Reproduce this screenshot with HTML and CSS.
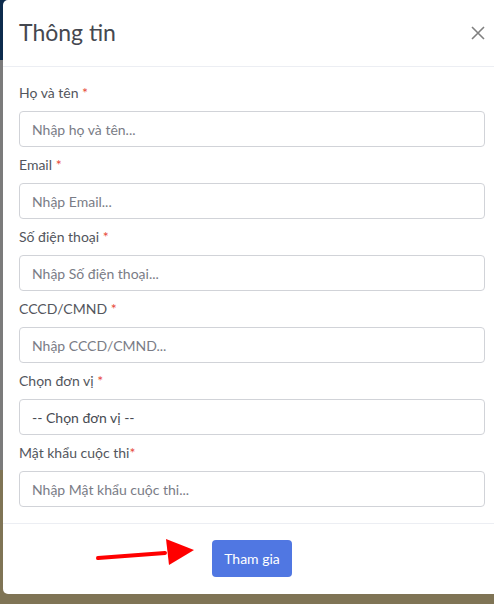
FILE: index.html
```html
<!DOCTYPE html>
<html lang="vi">
<head>
    <meta charset="UTF-8">
    <meta name="viewport" content="width=device-width, initial-scale=1.0">
    <title>Thông tin</title>
    <link rel="stylesheet" href="styles.css">
</head>
<body>
    <div class="modal">
        <div class="modal-header">
            <h2 class="modal-title">Thông tin</h2>
            <button class="close" type="button" aria-label="Đóng">
                <svg width="14" height="14" viewBox="0 0 14 14">
                    <path d="M1 1 L13 13 M13 1 L1 13" stroke="#808080" stroke-width="1.6" fill="none"/>
                </svg>
            </button>
        </div>

        <div class="modal-body">
            <div class="form-group">
                <label for="hoTen">Họ và tên <span class="req">*</span></label>
                <input type="text" id="hoTen" placeholder="Nhập họ và tên...">
            </div>
            <div class="form-group">
                <label for="email">Email <span class="req">*</span></label>
                <input type="text" id="email" placeholder="Nhập Email...">
            </div>
            <div class="form-group">
                <label for="soDienThoai">Số điện thoại <span class="req">*</span></label>
                <input type="text" id="soDienThoai" placeholder="Nhập Số điện thoại...">
            </div>
            <div class="form-group">
                <label for="cccd">CCCD/CMND <span class="req">*</span></label>
                <input type="text" id="cccd" placeholder="Nhập CCCD/CMND...">
            </div>
            <div class="form-group">
                <label for="donVi">Chọn đơn vị <span class="req">*</span></label>
                <select id="donVi">
                    <option>-- Chọn đơn vị --</option>
                </select>
            </div>
            <div class="form-group">
                <label for="matKhau">Mật khẩu cuộc thi<span class="req">*</span></label>
                <input type="text" id="matKhau" placeholder="Nhập Mật khẩu cuộc thi...">
            </div>
        </div>

        <div class="modal-footer">
            <button class="btn-primary" type="button">Tham gia</button>
        </div>

        <!-- mũi tên chỉ vào nút -->
        <svg class="arrow" width="120" height="40" viewBox="0 0 120 40">
            <path d="M7 30 L74 25" stroke="#f00" stroke-width="4" stroke-linecap="round" fill="none"/>
            <polygon points="75,11 103,22 78,37" fill="#f00"/>
        </svg>
    </div>
</body>
</html>
```

FILE: styles.css
```css
body {
    margin: 0;
    height: 604px;
    overflow: hidden;
    font-family: Lato, "Liberation Sans", sans-serif;
    background: linear-gradient(to bottom, #0d2b4d 0, #0d2b4d 60px, #7b7b7b 60px, #7b7b7b 470px, #7f7455 470px);
}

.modal {
    position: relative;
    margin-left: 3px;
    width: 498px;
    height: 594px;
    background: #fff;
    border-radius: 5px;
}

.modal-header {
    height: 66px;
    padding: 0 16px;
    display: flex;
    align-items: center;
    justify-content: space-between;
    border-bottom: 1px solid #eceef3;
}

.modal-title {
    margin: 0;
    font-size: 23px;
    font-weight: normal;
    color: #454850;
    line-height: 1.2;
}

.close {
    border: none;
    background: none;
    padding: 0;
    display: flex;
    cursor: pointer;
}

.modal-body {
    padding: 16px;
}

.form-group {
    margin-bottom: 8px;
}

.form-group:last-child {
    margin-bottom: 0;
}

.form-group label {
    display: block;
    font-size: 14px;
    line-height: 20px;
    color: #53565d;
    margin-bottom: 8px;
}

.req {
    color: #e74a3b;
}

.form-group input,
.form-group select {
    display: block;
    box-sizing: border-box;
    width: 100%;
    height: 36px;
    padding: 0 12px;
    font-family: inherit;
    font-size: 14px;
    color: #484b52;
    background: #fff;
    border: 1px solid #d1d3d8;
    border-radius: 4px;
    outline: none;
}

.form-group select {
    appearance: none;
    -webkit-appearance: none;
}

.form-group input::placeholder {
    color: #7a7c86;
}

.modal-footer {
    border-top: 1px solid #eceef3;
    padding: 16px;
    display: flex;
    justify-content: center;
}

.btn-primary {
    width: 80px;
    height: 37px;
    border: none;
    border-radius: 4px;
    background: #5077e2;
    color: #fff;
    font-family: inherit;
    font-size: 14px;
    cursor: pointer;
}

.arrow {
    position: absolute;
    left: 88px;
    top: 528px;
}
```
